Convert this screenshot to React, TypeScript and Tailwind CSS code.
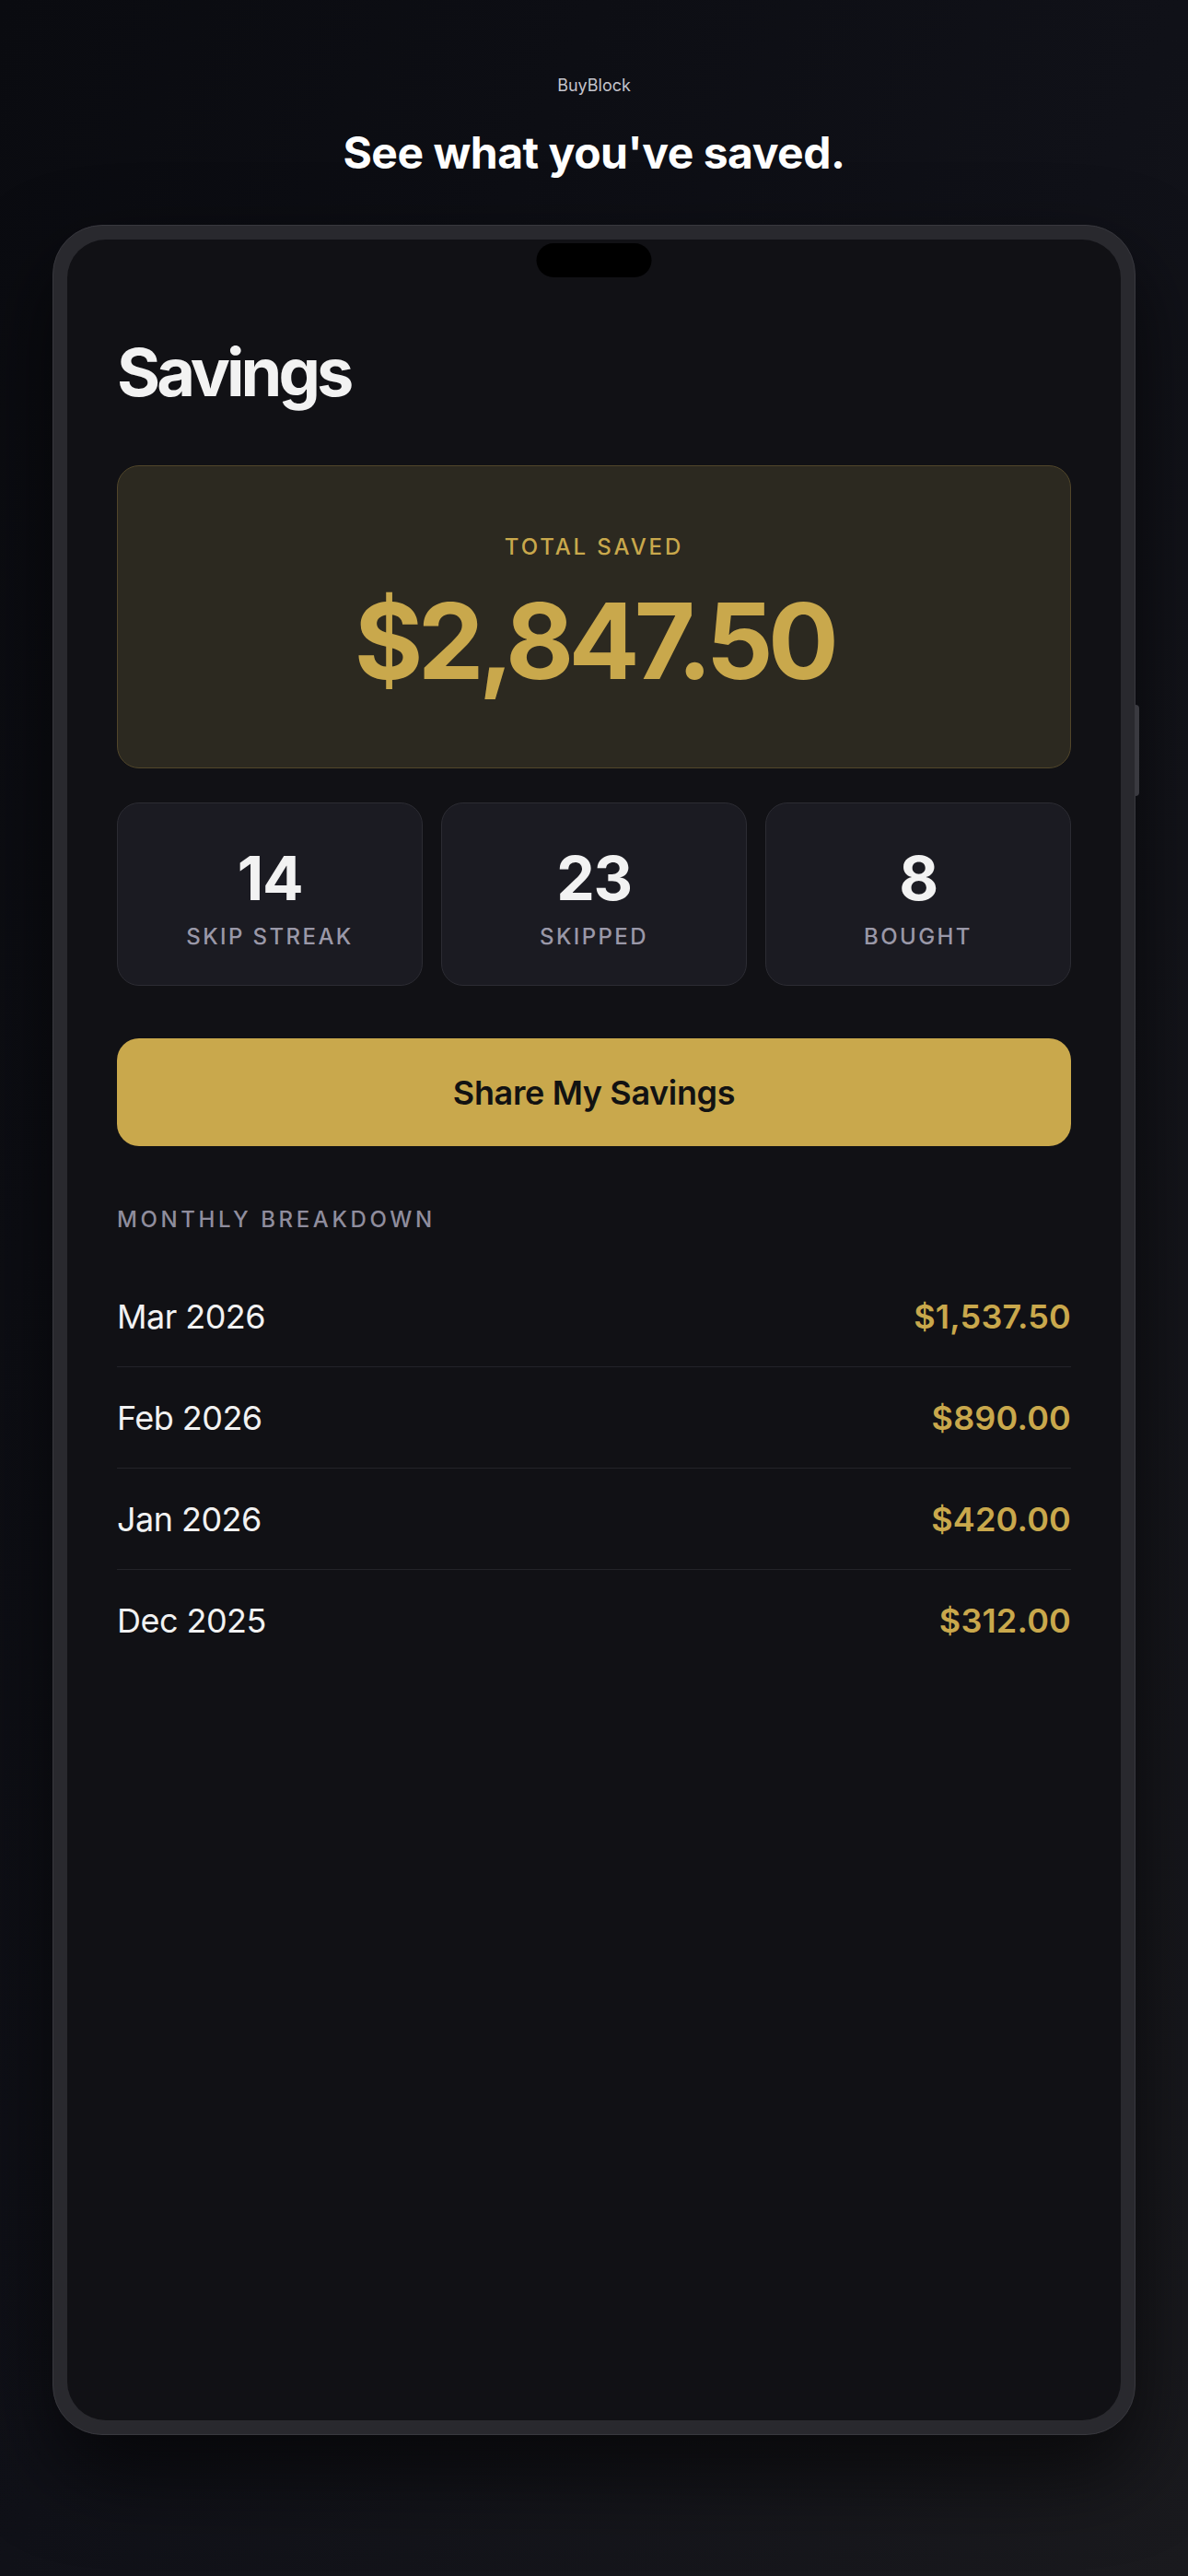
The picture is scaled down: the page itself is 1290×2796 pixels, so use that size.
const months = [
  { label: "Mar 2026", amount: "$1,537.50" },
  { label: "Feb 2026", amount: "$890.00" },
  { label: "Jan 2026", amount: "$420.00" },
  { label: "Dec 2025", amount: "$312.00" },
];

const stats = [
  { value: "14", label: "Skip Streak" },
  { value: "23", label: "Skipped" },
  { value: "8", label: "Bought" },
];

export default function App() {
  return (
    <div
      className="min-h-[2796px] w-full bg-gradient-to-br from-[#0a0b10] via-[#101118] to-[#1a1a1e] text-white"
      style={{ fontFamily: "Inter, 'Noto Sans', sans-serif" }}
    >
      <header className="flex flex-col items-center pt-[84px]">
        <p className="text-[18px] leading-none text-[#c4c4cc]">BuyBlock</p>
        <h1 className="mt-[40px] text-[48px] font-bold leading-none tracking-[-0.01em] text-white">
          See what you've saved.
        </h1>
      </header>

      <div className="relative mx-[57px] mt-[54px] h-[2399px] rounded-[54px] border border-[#38383e] bg-[#29292e] p-[15px] shadow-[0_40px_90px_rgba(0,0,0,0.65)]">
        <span className="absolute right-[-5px] top-[520px] h-[99px] w-[4px] rounded-r-sm bg-[#3a3a40]" />
        <div className="relative h-full rounded-[42px] bg-[#111115] px-[54px] pt-[108px]">
          <div className="absolute left-1/2 top-[4px] h-[37px] w-[125px] -translate-x-1/2 rounded-full bg-black" />

          <h2 className="text-[72px] font-bold leading-none tracking-[-0.055em] text-[#f2f2f2]">
            Savings
          </h2>

          <section className="mt-[65px] flex flex-col items-center rounded-[24px] border border-[#51462a] bg-[#2c2920] pb-[80px] pt-[76px]">
            <p className="text-[24px] font-medium leading-none tracking-[0.12em] text-[#c9a84c]">
              TOTAL SAVED
            </p>
            <p className="mt-[33px] text-[114px] font-bold leading-none tracking-[-0.05em] text-[#c9a84c]">
              $2,847.50
            </p>
          </section>

          <div className="mt-[37px] grid grid-cols-3 gap-[20px]">
            {stats.map((s) => (
              <div
                key={s.label}
                className="flex h-[199px] flex-col items-center rounded-[24px] border border-[#2c2c33] bg-[#1b1b22] pt-[48px]"
              >
                <span className="text-[66px] font-bold leading-none tracking-[-0.02em] text-[#f2f2f2]">
                  {s.value}
                </span>
                <span className="mt-[19px] text-[24px] font-medium uppercase leading-none tracking-[0.1em] text-[#9a98a8]">
                  {s.label}
                </span>
              </div>
            ))}
          </div>

          <button className="mt-[57px] flex h-[117px] w-full items-center justify-center rounded-[24px] bg-[#c9a84c] text-[36px] font-semibold tracking-[-0.01em] text-[#121212]">
            Share My Savings
          </button>

          <p className="mt-[68px] text-[24px] font-medium leading-none tracking-[0.15em] text-[#8f8d9d]">
            MONTHLY BREAKDOWN
          </p>

          <ul className="mt-[38px] divide-y divide-[#232329]">
            {months.map((m) => (
              <li
                key={m.label}
                className="flex h-[110px] items-center justify-between text-[36px] leading-none"
              >
                <span className="tracking-[-0.015em] text-[#f2f2f2]">{m.label}</span>
                <span className="font-semibold tracking-[0.005em] text-[#c9a84c]">{m.amount}</span>
              </li>
            ))}
          </ul>
        </div>
      </div>
    </div>
  );
}
